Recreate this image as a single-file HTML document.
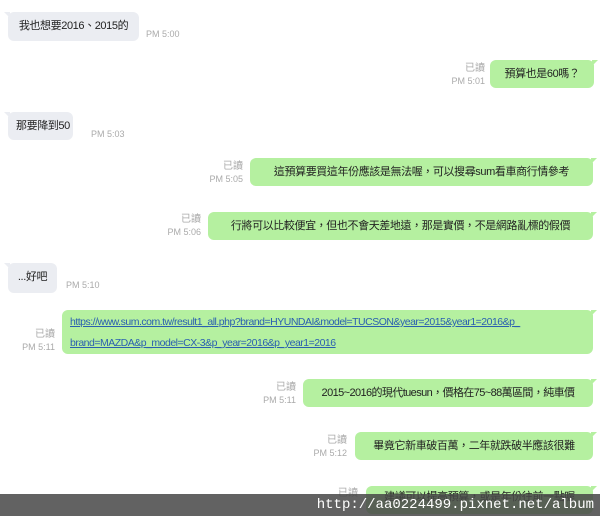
<!DOCTYPE html><html><head><meta charset="utf-8"><style>
body{margin:0;width:600px;height:516px;background:#fff;position:relative;overflow:hidden;font-family:"Liberation Sans","Noto Sans CJK TC",sans-serif;}
.b{position:absolute;border-radius:6px;font-size:11px;letter-spacing:-0.4px;color:#222;line-height:28px;padding:0 8px;box-sizing:border-box;white-space:nowrap;text-align:center}
.g{background:#ebedf2}
.gr{background:#b5f0a0}
.g:before{content:"";position:absolute;left:-4px;top:0;border-top:6px solid #ebedf2;border-left:6px solid transparent}
.gr:after{content:"";position:absolute;right:-4px;top:0;border-top:6px solid #b5f0a0;border-right:6px solid transparent}
.t{position:absolute;font-size:9px;color:#aaa;line-height:12px;text-align:right}
.r{font-size:10px}
a{color:#2a5fb0;text-decoration:underline}
</style></head><body>
<div class="b g" style="left:8px;top:12px;width:131px;height:29px">我也想要2016、2015的</div>
<div class="t" style="left:146px;top:28px">PM 5:00</div>

<div class="b gr" style="left:490px;top:60px;width:104px;height:28px">預算也是60嗎？</div>
<div class="t" style="right:115px;top:62px"><span class="r">已讀</span><br>PM 5:01</div>

<div class="b g" style="left:8px;top:112px;width:65px;height:28px">那要降到50</div>
<div class="t" style="left:91px;top:128px">PM 5:03</div>

<div class="b gr" style="left:250px;top:158px;width:343px;height:28px">這預算要買這年份應該是無法喔，可以搜尋sum看車商行情參考</div>
<div class="t" style="right:357px;top:160px"><span class="r">已讀</span><br>PM 5:05</div>

<div class="b gr" style="left:208px;top:212px;width:385px;height:28px">行將可以比較便宜，但也不會天差地遠，那是實價，不是網路亂標的假價</div>
<div class="t" style="right:399px;top:213px"><span class="r">已讀</span><br>PM 5:06</div>

<div class="b g" style="left:8px;top:263px;width:49px;height:30px;line-height:28px">...好吧</div>
<div class="t" style="left:66px;top:279px">PM 5:10</div>

<div class="b gr" style="left:62px;top:310px;width:531px;height:44px;line-height:21px;padding-top:2px;font-size:10.5px;letter-spacing:-0.5px;text-align:left"><a>https://www.sum.com.tw/result1_all.php?brand=HYUNDAI&amp;model=TUCSON&amp;year=2015&amp;year1=2016&amp;p_</a><br><a>brand=MAZDA&amp;p_model=CX-3&amp;p_year=2016&amp;p_year1=2016</a></div>
<div class="t" style="right:545px;top:328px"><span class="r">已讀</span><br>PM 5:11</div>

<div class="b gr" style="left:303px;top:379px;width:290px;height:28px;letter-spacing:-0.6px">2015~2016的現代tuesun，價格在75~88萬區間，純車價</div>
<div class="t" style="right:304px;top:381px"><span class="r">已讀</span><br>PM 5:11</div>

<div class="b gr" style="left:355px;top:432px;width:238px;height:28px">畢竟它新車破百萬，二年就跌破半應該很難</div>
<div class="t" style="right:253px;top:434px"><span class="r">已讀</span><br>PM 5:12</div>

<div class="b gr" style="left:366px;top:486px;width:227px;height:28px;line-height:22px">建議可以提高預算，或是年份往前一點喔</div>
<div class="t" style="right:242px;top:487px"><span class="r">已讀</span></div>

<div style="position:absolute;left:0;top:494px;width:600px;height:22px;background:rgba(70,70,70,0.85);color:#fff;font-family:'Liberation Mono',monospace;font-size:14px;line-height:22px;text-align:right;padding-right:6px;box-sizing:border-box">http://aa0224499.pixnet.net/album</div>
</body></html>
